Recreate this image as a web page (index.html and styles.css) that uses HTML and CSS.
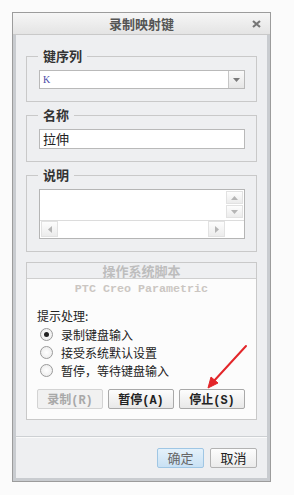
FILE: index.html
```html
<!DOCTYPE html>
<html lang="zh-CN">
<head>
    <meta charset="UTF-8">
    <meta name="viewport" content="width=device-width, initial-scale=1.0">
    <title>录制映射键</title>
    <link rel="stylesheet" href="styles.css">
</head>
<body>
    <div class="dialog">
        <div class="title-bar">
            <span></span>
            <span class="title">录制映射键</span>
            <span class="close">
                <svg width="9" height="8" viewBox="0 0 9 8"><path d="M1 1L8 7M8 1L1 7" stroke="#777" stroke-width="2.2"/></svg>
            </span>
        </div>

        <div class="dialog-body">
            <fieldset class="group">
                <legend>键序列</legend>
                <div class="combo">
                    <span class="combo-value">K</span>
                    <span class="combo-btn">
                        <svg width="7" height="4" viewBox="0 0 7 4"><path d="M0 0H7L3.5 4Z" fill="#7a7a7a"/></svg>
                    </span>
                </div>
            </fieldset>

            <fieldset class="group">
                <legend>名称</legend>
                <div class="text-input">拉伸</div>
            </fieldset>

            <fieldset class="group">
                <legend>说明</legend>
                <div class="memo">
                    <div class="memo-text"></div>
                    <div class="vscroll">
                        <span class="sbtn"><svg width="7" height="4" viewBox="0 0 7 4"><path d="M0 4H7L3.5 0Z" fill="#b5b5b5"/></svg></span>
                        <span class="sbtn"><svg width="7" height="4" viewBox="0 0 7 4"><path d="M0 0H7L3.5 4Z" fill="#b5b5b5"/></svg></span>
                    </div>
                    <div class="hscroll">
                        <span class="sbtn"><svg width="4" height="7" viewBox="0 0 4 7"><path d="M4 0V7L0 3.5Z" fill="#b5b5b5"/></svg></span>
                        <span class="htrack"></span>
                        <span class="sbtn"><svg width="4" height="7" viewBox="0 0 4 7"><path d="M0 0V7L4 3.5Z" fill="#b5b5b5"/></svg></span>
                    </div>
                    <div class="corner"></div>
                </div>
            </fieldset>

            <div class="script-box">
                <div class="script-head">操作系统脚本</div>
                <div class="script-content">
                    <div class="app-name">PTC Creo Parametric</div>
                    <div class="prompt">提示处理:</div>
                    <label class="radio-row"><span class="radio checked"></span>录制键盘输入</label>
                    <label class="radio-row"><span class="radio"></span>接受系统默认设置</label>
                    <label class="radio-row"><span class="radio"></span>暂停，等待键盘输入</label>
                    <div class="action-row">
                        <button class="btn" disabled>录制<span class="mn">(R)</span></button>
                        <button class="btn">暂停<span class="mn">(A)</span></button>
                        <button class="btn">停止<span class="mn">(S)</span></button>
                    </div>
                </div>
            </div>
        </div>

        <div class="dialog-footer">
            <button class="foot-btn default">确定</button>
            <button class="foot-btn">取消</button>
        </div>
    </div>

    <svg class="arrow" width="294" height="495" viewBox="0 0 294 495">
        <path d="M246 346L213 382" stroke="#e3262a" stroke-width="2" stroke-linecap="round"/>
        <path d="M208 388L211 377L218 383Z" fill="#e3262a" stroke="#e3262a" stroke-width="1"/>
    </svg>
</body>
</html>
```

FILE: styles.css
```css
* {
    box-sizing: border-box;
}
body {
    margin: 0;
    padding: 12px 0 0 12px;
    background-color: #fbfbfb;
    font-family: "Noto Sans CJK SC", sans-serif;
    font-size: 12px;
    color: #222;
}
.dialog {
    width: 259px;
    height: 470px;
    border: 1px solid #9c9c9c;
    background-color: #c9ccd0;
    padding: 0 3px 3px;
    display: flex;
    flex-direction: column;
}
.title-bar {
    margin: 0 -3px;
    height: 22px;
    border-bottom: 1px solid #c9c9c9;
    background: linear-gradient(#f6f6f6, #e4e4e4);
    display: grid;
    grid-template-columns: 1fr auto 1fr;
    align-items: center;
}
.title {
    font-size: 13px;
    font-weight: bold;
    color: #555;
    line-height: 21px;
}
.close {
    justify-self: end;
    margin-right: 9px;
    display: flex;
}
.dialog-body {
    flex: 1;
    background-color: #eeeff1;
    padding: 13px 10px 0;
}
.group {
    margin: 0 0 5px;
    padding: 6px 11px 12px 12px;
    border: 1px solid #c9c9c9;
    min-width: 0;
}
.group legend {
    padding: 0 5px;
    margin-left: -1px;
    font-size: 13px;
    font-weight: bold;
    line-height: 16px;
    color: #333;
}
.combo {
    height: 19px;
    border: 1px solid #b9b9b9;
    background-color: #fff;
    display: flex;
}
.combo-value {
    flex: 1;
    padding-left: 3px;
    font-family: "Liberation Serif", serif;
    font-size: 10px;
    line-height: 17px;
    color: #4a4aa8;
}
.combo-btn {
    width: 16px;
    border-left: 1px solid #c6c6c6;
    background: linear-gradient(#fafafa, #e6e6e6);
    display: flex;
    align-items: center;
    justify-content: center;
}
.text-input {
    height: 20px;
    border: 1px solid #b9b9b9;
    background-color: #fff;
    padding-left: 3px;
    font-size: 13px;
    line-height: 18px;
    color: #222;
}
.memo {
    height: 50px;
    border: 1px solid #b5b5b5;
    background-color: #fff;
    display: grid;
    grid-template-columns: 1fr 19px;
    grid-template-rows: 1fr 18px;
}
.vscroll {
    padding: 1px 1px 0 1px;
    display: flex;
    flex-direction: column;
    gap: 1px;
}
.sbtn {
    border: 1px solid #e2e2e2;
    background: linear-gradient(#fdfdfd, #ececec);
    display: flex;
    align-items: center;
    justify-content: center;
}
.vscroll .sbtn {
    height: 13px;
}
.hscroll {
    border-top: 1px solid #dcdcdc;
    padding: 0 0 1px 1px;
    display: flex;
}
.hscroll .sbtn {
    width: 17px;
}
.htrack {
    flex: 1;
}
.corner {
    border-top: 1px solid #dcdcdc;
}
.script-box {
    margin-top: 10px;
    border: 1px solid #c9c9c9;
}
.script-head {
    height: 16px;
    border-bottom: 1px solid #cfcfcf;
    text-align: center;
    font-size: 13px;
    font-weight: bold;
    line-height: 15px;
    color: #bdbdbd;
}
.script-content {
    background-color: #fcfcfc;
    padding: 3px 10px 10px;
}
.app-name {
    text-align: center;
    font-family: "Liberation Mono", monospace;
    font-size: 11.7px;
    font-weight: bold;
    line-height: 14px;
    color: #cbc6c2;
}
.prompt {
    margin-top: 11px;
    line-height: 18px;
}
.radio-row {
    height: 18px;
    padding-left: 3px;
    display: flex;
    align-items: center;
    gap: 8px;
}
.radio {
    width: 13px;
    height: 13px;
    border: 1px solid #9a9a9a;
    border-radius: 50%;
    background: radial-gradient(#ffffff, #e8e8e8);
    display: flex;
    align-items: center;
    justify-content: center;
}
.radio.checked::after {
    content: "";
    width: 5px;
    height: 5px;
    border-radius: 50%;
    background-color: #222;
}
.action-row {
    margin-top: 10px;
    display: flex;
    gap: 5px;
}
.btn {
    width: 66px;
    height: 20px;
    padding: 0;
    border: 1px solid #a9a9a9;
    border-radius: 2px;
    background: linear-gradient(#fdfdfd, #e8e8e8);
    font-family: "Noto Sans CJK SC", sans-serif;
    font-size: 12px;
    font-weight: bold;
    line-height: 18px;
    color: #222;
}
.btn .mn {
    font-family: "Liberation Mono", monospace;
}
.btn:disabled {
    border-color: #d3d3d3;
    background: #f1f1f1;
    color: #a8a8a8;
}
.dialog-footer {
    height: 42px;
    border-top: 1px solid #cdd0d3;
    box-shadow: inset 0 1px #fafafa;
    background-color: #eeeff1;
    padding: 11px 10px 0 0;
    display: flex;
    justify-content: flex-end;
    align-items: flex-start;
    gap: 6px;
}
.foot-btn {
    width: 47px;
    height: 20px;
    padding: 0;
    border: 1px solid #b3b3b3;
    border-radius: 2px;
    background: linear-gradient(#fdfdfd, #ebebeb);
    font-family: "Noto Sans CJK SC", sans-serif;
    font-size: 13px;
    line-height: 18px;
    color: #222;
}
.foot-btn.default {
    border-color: #9fc6e4;
    background: linear-gradient(#e4f1fb, #c9e1f4);
    color: #666;
}
.arrow {
    position: absolute;
    left: 0;
    top: 0;
    pointer-events: none;
}
```
